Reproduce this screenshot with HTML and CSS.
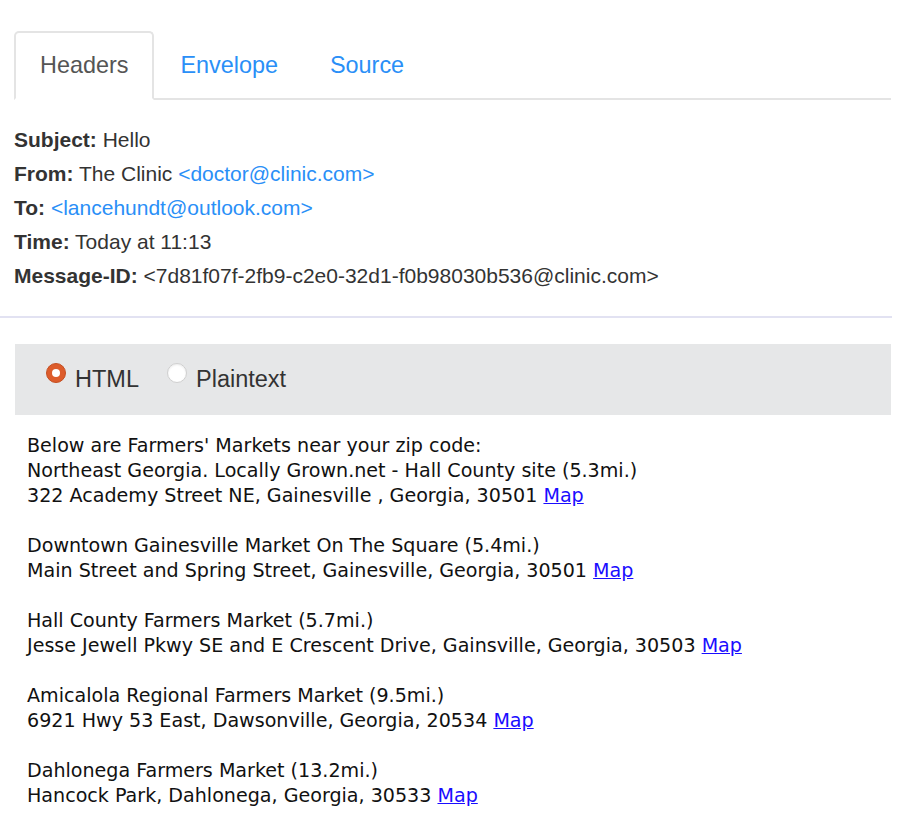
FILE: index.html
```html
<!DOCTYPE html>
<html>
<head>
<meta charset="utf-8">
<link rel="stylesheet" href="styles.css">
</head>
<body>
<div class="page">
  <ul class="tabs">
    <li class="tab active">Headers</li>
    <li class="tab"><a href="#">Envelope</a></li>
    <li class="tab"><a href="#">Source</a></li>
  </ul>
  <div class="headers">
    <div class="row"><b>Subject:</b> Hello</div>
    <div class="row"><b>From:</b> The Clinic <a href="#">&lt;doctor@clinic.com&gt;</a></div>
    <div class="row"><b>To:</b> <a href="#">&lt;lancehundt@outlook.com&gt;</a></div>
    <div class="row"><b>Time:</b> Today at 11:13</div>
    <div class="row"><b>Message-ID:</b> &lt;7d81f07f-2fb9-c2e0-32d1-f0b98030b536@clinic.com&gt;</div>
  </div>
</div>
<div class="sep"></div>
<div class="page">
  <div class="format">
    <label class="opt"><span class="radio checked"></span>HTML</label>
    <label class="opt"><span class="radio"></span>Plaintext</label>
  </div>
  <div class="message">
    Below are Farmers' Markets near your zip code:<br>
    Northeast Georgia. Locally Grown.net - Hall County site (5.3mi.)<br>
    322 Academy Street NE, Gainesville , Georgia, 30501 <a href="#">Map</a><br>
    <br>
    Downtown Gainesville Market On The Square (5.4mi.)<br>
    Main Street and Spring Street, Gainesville, Georgia, 30501 <a href="#">Map</a><br>
    <br>
    Hall County Farmers Market (5.7mi.)<br>
    Jesse Jewell Pkwy SE and E Crescent Drive, Gainsville, Georgia, 30503 <a href="#">Map</a><br>
    <br>
    Amicalola Regional Farmers Market (9.5mi.)<br>
    6921 Hwy 53 East, Dawsonville, Georgia, 20534 <a href="#">Map</a><br>
    <br>
    Dahlonega Farmers Market (13.2mi.)<br>
    Hancock Park, Dahlonega, Georgia, 30533 <a href="#">Map</a>
  </div>
</div>
</body>
</html>
```
FILE: styles.css
```css
html, body {
  margin: 0;
  padding: 0;
  background: #fff;
}
body {
  font-family: "Liberation Sans", Arial, sans-serif;
  color: #333;
}
.page {
  margin-left: 14px;
  width: 877px;
}
.tabs {
  list-style: none;
  margin: 31px 0 0 0;
  padding: 0;
  display: flex;
  border-bottom: 2px solid #e4e4e4;
}
.tab {
  font-size: 23.4px;
  line-height: 64px;
  padding: 0 24px;
  margin-bottom: -2px;
  border: 2px solid transparent;
  border-radius: 5px 5px 0 0;
  box-sizing: border-box;
  height: 69px;
}
.tab a {
  color: #2a8ff7;
  text-decoration: none;
}
.tab.active {
  color: #555;
  border-color: #e4e4e4;
  border-bottom-color: #fff;
  background: #fff;
}
.headers {
  margin-top: 23px;
  font-size: 21px;
}
.headers .row {
  height: 34px;
  line-height: 34px;
}
.headers b {
  font-weight: bold;
  color: #333;
}
.headers a {
  color: #2a8ff7;
  text-decoration: none;
}
.sep {
  margin-top: 23px;
  width: 892px;
  height: 2px;
  background: #e2e2f2;
}
.format {
  margin-top: 26px;
  margin-left: 1px;
  height: 71px;
  background: #e6e7e8;
  display: flex;
  align-items: center;
  padding-left: 31px;
  gap: 28px;
  font-size: 23.5px;
  color: #333;
}
.opt {
  display: flex;
  align-items: center;
  gap: 9px;
}
.radio {
  width: 20px;
  height: 20px;
  border-radius: 50%;
  box-sizing: border-box;
  background: #fff;
  border: 1px solid #cfcfcf;
  box-shadow: inset 0 1px 2px rgba(0,0,0,0.08);
  position: relative;
  top: -7px;
}
.radio.checked {
  background: #dd5c2b;
  border: 1px solid #c44f22;
  box-shadow: none;
}
.radio.checked::after {
  content: "";
  position: absolute;
  left: 5px;
  top: 5px;
  width: 8px;
  height: 8px;
  border-radius: 50%;
  background: #fff;
}
.message {
  padding: 18px 13px;
  font-family: "DejaVu Sans", sans-serif;
  font-size: 19.1px;
  line-height: 25px;
  color: #111;
}
.message a {
  color: #1a0dff;
  text-decoration: underline;
}
```
